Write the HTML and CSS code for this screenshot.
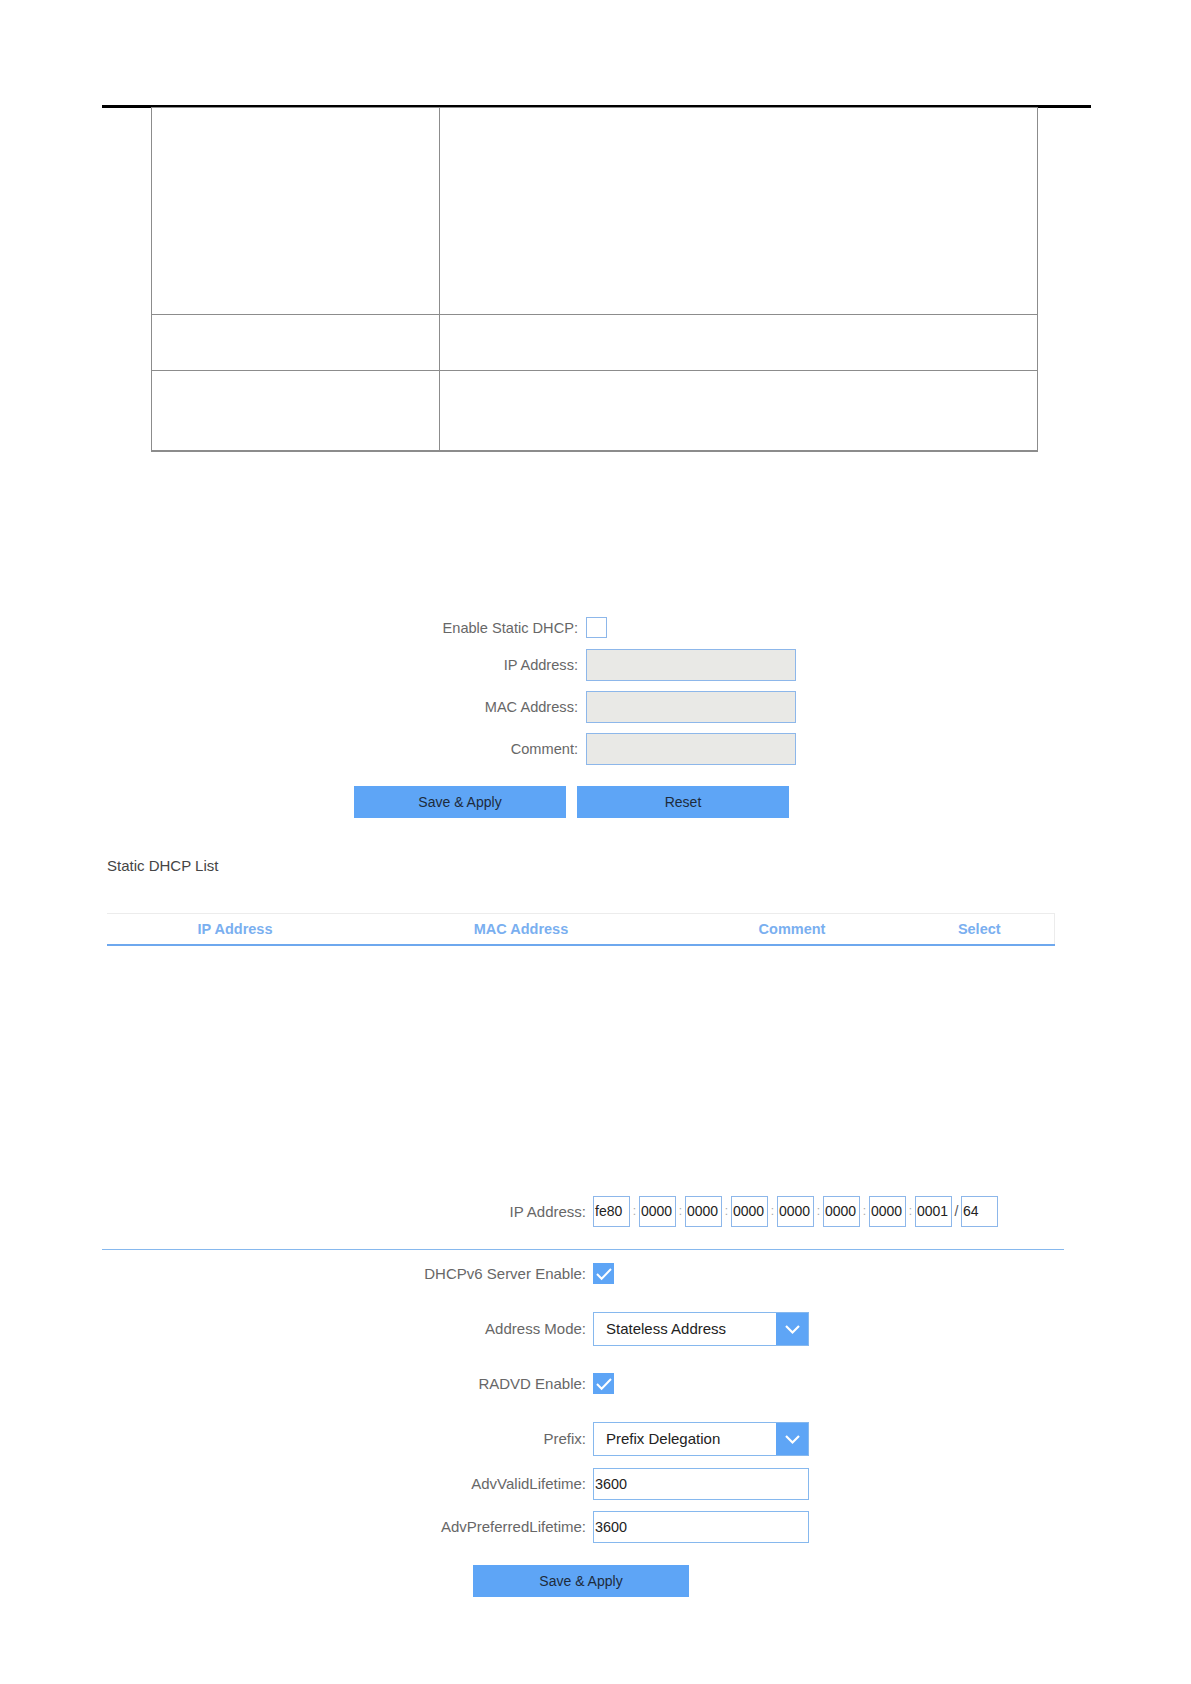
FILE: index.html
```html
<!DOCTYPE html>
<html lang="en">
<head>
<meta charset="utf-8">
<title>Static DHCP / DHCPv6</title>
<link rel="stylesheet" href="styles.css">
</head>
<body>
<div class="rule"></div>
<div class="spec">
  <div class="cell"></div><div class="cell"></div>
  <div class="cell"></div><div class="cell"></div>
  <div class="cell last"></div><div class="cell last"></div>
</div>

<section class="sform">
  <div class="frow first"><span class="flabel">Enable Static DHCP:</span><span class="cb-empty"></span></div>
  <div class="frow second"><span class="flabel">IP Address:</span><span class="tbox"></span></div>
  <div class="frow"><span class="flabel">MAC Address:</span><span class="tbox"></span></div>
  <div class="frow"><span class="flabel">Comment:</span><span class="tbox"></span></div>
  <div class="btns"><button class="btn">Save &amp; Apply</button><button class="btn">Reset</button></div>
</section>

<div class="list-title">Static DHCP List</div>
<table class="dlist">
  <thead>
    <tr><th class="c-ip">IP Address</th><th class="c-mac">MAC Address</th><th class="c-com">Comment</th><th class="c-sel">Select</th></tr>
  </thead>
</table>

<section class="v6">
  <div class="vrow">
    <span class="vlabel">IP Address:</span>
    <div class="ipboxes">
      <span class="ipbox">fe80</span><span class="sep">:</span>
      <span class="ipbox">0000</span><span class="sep">:</span>
      <span class="ipbox">0000</span><span class="sep">:</span>
      <span class="ipbox">0000</span><span class="sep">:</span>
      <span class="ipbox">0000</span><span class="sep">:</span>
      <span class="ipbox">0000</span><span class="sep">:</span>
      <span class="ipbox">0000</span><span class="sep">:</span>
      <span class="ipbox">0001</span><span class="sep slash">/</span>
      <span class="ipbox">64</span>
    </div>
  </div>
  <div class="divider"></div>
  <div class="vrow m13"><span class="vlabel">DHCPv6 Server Enable:</span><span class="cb-on"><svg width="21" height="21" viewBox="0 0 21 21"><path d="M4 11 L8.6 15.8 L18 6" fill="none" stroke="#fff" stroke-width="2"/></svg></span></div>
  <div class="vrow m28"><span class="vlabel">Address Mode:</span><div class="select"><span class="val">Stateless Address</span><span class="arrow"><svg width="32" height="32" viewBox="0 0 32 32"><path d="M10 13 L16.5 19.5 L23 13" fill="none" stroke="#fff" stroke-width="2.2"/></svg></span></div></div>
  <div class="vrow m27"><span class="vlabel">RADVD Enable:</span><span class="cb-on"><svg width="21" height="21" viewBox="0 0 21 21"><path d="M4 11 L8.6 15.8 L18 6" fill="none" stroke="#fff" stroke-width="2"/></svg></span></div>
  <div class="vrow m28"><span class="vlabel">Prefix:</span><div class="select"><span class="val">Prefix Delegation</span><span class="arrow"><svg width="32" height="32" viewBox="0 0 32 32"><path d="M10 13 L16.5 19.5 L23 13" fill="none" stroke="#fff" stroke-width="2.2"/></svg></span></div></div>
  <div class="vrow m12"><span class="vlabel">AdvValidLifetime:</span><span class="tinput">3600</span></div>
  <div class="vrow m11"><span class="vlabel">AdvPreferredLifetime:</span><span class="tinput">3600</span></div>
  <div class="save-wrap"><button class="btn btn-save">Save &amp; Apply</button></div>
</section>
</body>
</html>
```

FILE: styles.css
```css
* { box-sizing: border-box; }
html, body { margin: 0; padding: 0; background: #fff; }
body {
  font-family: "Liberation Sans", Arial, sans-serif;
  width: 1191px;
  min-height: 1684px;
}

/* top rule + spec table */
.rule {
  margin: 105px 0 0 102px;
  width: 989px;
  height: 3px;
  background: #000;
}
.spec {
  margin: -1px 0 0 151px;
  width: 887px;
  display: grid;
  grid-template-columns: 288px 598px;
  grid-template-rows: 207px 56px 81px;
  border-top: 1px solid #8c8c8c;
  border-left: 1px solid #8c8c8c;
}
.spec .cell {
  border-right: 1px solid #8c8c8c;
  border-bottom: 1px solid #8c8c8c;
}
.spec .cell.last { border-bottom-width: 2px; }

/* static DHCP form */
.sform { margin-top: 165px; }
.frow {
  display: flex;
  align-items: center;
  margin-top: 10px;
}
.frow.first { margin-top: 0; }
.frow.second { margin-top: 11px; }
.flabel {
  width: 578px;
  margin-right: 8px;
  text-align: right;
  font-size: 14.6px;
  color: #676767;
}
.cb-empty {
  width: 21px;
  height: 21px;
  border: 1px solid #8db7ea;
  background: #fff;
}
.tbox {
  width: 210px;
  height: 32px;
  border: 1px solid #8db7ea;
  background: #e9e9e6;
}
.btns {
  display: flex;
  gap: 11px;
  margin: 21px 0 0 354px;
}
.btn {
  width: 212px;
  height: 32px;
  border: 0;
  padding: 0;
  background: #5ea5f6;
  color: #1d2b3c;
  font: 14px "Liberation Sans", Arial, sans-serif;
}

/* list */
.list-title {
  margin: 39px 0 0 107px;
  font-size: 15px;
  line-height: 17px;
  color: #454545;
}
.dlist {
  margin: 39px 0 0 107px;
  width: 947px;
  border-collapse: collapse;
  table-layout: fixed;
}
.dlist th {
  height: 31px;
  padding: 0;
  font-size: 14.5px;
  font-weight: bold;
  color: #7aaff0;
  text-align: center;
  border-top: 1px solid #ececec;
  border-bottom: 2px solid #6ea8ee;
}
.dlist .c-ip { width: 256px; }
.dlist .c-mac { width: 316px; }
.dlist .c-com { width: 226px; }
.dlist .c-sel { width: 149px; border-right: 1px solid #ececec; }

/* IPv6 section */
.v6 { margin-top: 250px; }
.vrow {
  display: flex;
  align-items: center;
}
.vlabel {
  width: 586px;
  margin-right: 7px;
  text-align: right;
  font-size: 15px;
  color: #676767;
}
.ipboxes { display: flex; align-items: center; }
.ipbox {
  width: 37px;
  height: 31px;
  border: 1px solid #8db7ea;
  padding-left: 1px;
  display: flex;
  align-items: center;
  font-size: 14px;
  color: #222;
}
.sep {
  width: 9px;
  text-align: center;
  font-size: 12px;
  color: #a8a8a8;
}
.sep.slash { color: #555; font-size: 14px; }

.divider {
  margin: 22px 0 0 102px;
  width: 962px;
  height: 1px;
  background: #86b8ee;
}
.m11 { margin-top: 11px; }
.m12 { margin-top: 12px; }
.m13 { margin-top: 13px; }
.m27 { margin-top: 27px; }
.m28 { margin-top: 28px; }

.cb-on {
  width: 21px;
  height: 21px;
  background: #5ea5f6;
  display: flex;
}
.select {
  width: 216px;
  height: 34px;
  border: 1px solid #86b8ee;
  display: flex;
  align-items: stretch;
}
.select .val {
  flex: 1;
  display: flex;
  align-items: center;
  padding-left: 12px;
  font-size: 15px;
  color: #222;
}
.select .arrow {
  width: 32px;
  background: #5ea5f6;
  display: flex;
  align-items: center;
}
.tinput {
  width: 216px;
  height: 32px;
  border: 1px solid #86b8ee;
  padding-left: 1px;
  display: flex;
  align-items: center;
  font-size: 14.4px;
  color: #222;
}
.save-wrap { margin: 22px 0 0 473px; }
.btn-save { width: 216px; }
```
